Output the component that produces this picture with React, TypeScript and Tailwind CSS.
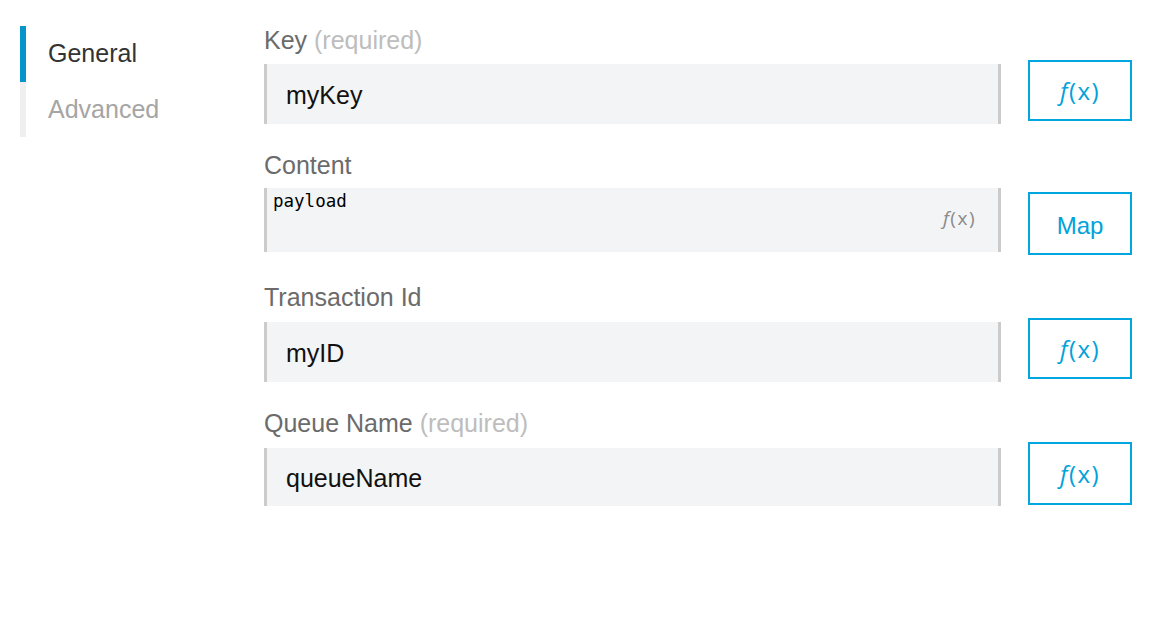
import React from "react";

const sans = "font-['Liberation_Sans',Arial,sans-serif]";

function Sidebar() {
  return (
    <nav className="w-[264px] shrink-0 pt-[26px] pl-5">
      <div className="flex h-14 items-center border-l-[6px] border-[#0795c9] pl-[22px] text-[25px] text-[#333]">
        General
      </div>
      <div className="flex h-[55px] items-center border-l-[6px] border-[#efefef] pl-[22px] text-[25px] text-[#a5a5a5]">
        Advanced
      </div>
    </nav>
  );
}

function Fx({ className }: { className: string }) {
  return (
    <span className={"font-['Open_Sans',sans-serif] tracking-[1.5px] " + className}>
      <span className="italic">f</span>(x)
    </span>
  );
}

function FxButton({ children, className }: { children: React.ReactNode; className: string }) {
  return (
    <button
      className={
        "flex w-[104px] shrink-0 items-center justify-center border-2 border-[#00a6df] bg-white text-[#00a2da] " +
        className
      }
    >
      {children}
    </button>
  );
}

function Label({ name, required }: { name: string; required?: boolean }) {
  return (
    <div className="h-6 leading-6 text-[25px] text-[#6b6b6b]">
      {name}
      {required && <span className="text-[#bdbdbd]"> (required)</span>}
    </div>
  );
}

export default function App() {
  return (
    <div className={`flex h-[640px] w-[1152px] bg-white ${sans}`}>
      <Sidebar />
      <main className="flex flex-col pt-7">
        {/* Key */}
        <Label name="Key" required />
        <div className="mt-3 flex gap-[27px]">
          <div className="flex h-[60px] w-[737px] items-center border-x-[3px] border-[#cbcbcb] bg-[#f3f4f6] pl-[19px] pt-1 text-[25px] text-[#111]">
            myKey
          </div>
          <FxButton className="-mt-1 h-[61px]">
            <Fx className="text-[24px]" />
          </FxButton>
        </div>

        {/* Content */}
        <div className="mt-[29px]">
          <Label name="Content" />
        </div>
        <div className="mt-[11px] flex gap-[27px]">
          <div className="relative h-16 w-[737px] border-x-[3px] border-[#cbcbcb] bg-[#f3f4f6] pl-[6px] pt-[1px]">
            <span className="font-['DejaVu_Sans_Mono',monospace] text-[17.5px] leading-6 text-black">payload</span>
            <span className="absolute right-[22px] top-[16px]">
              <Fx className="text-[19px] tracking-[0.5px] text-[#8a8a8a]" />
            </span>
          </div>
          <FxButton className="mt-1 h-[63px] pt-1 text-[24px]">Map</FxButton>
        </div>

        {/* Transaction Id */}
        <div className="mt-[30px]">
          <Label name="Transaction Id" />
        </div>
        <div className="mt-[13px] flex gap-[27px]">
          <div className="flex h-[60px] w-[737px] items-center border-x-[3px] border-[#cbcbcb] bg-[#f3f4f6] pl-[19px] pt-1 text-[25px] text-[#111]">
            myID
          </div>
          <FxButton className="-mt-1 h-[61px]">
            <Fx className="text-[24px]" />
          </FxButton>
        </div>

        {/* Queue Name */}
        <div className="mt-[29px]">
          <Label name="Queue Name" required />
        </div>
        <div className="mt-[13px] flex gap-[27px]">
          <div className="flex h-[58px] w-[737px] items-center border-x-[3px] border-[#cbcbcb] bg-[#f3f4f6] pl-[19px] pt-1 text-[25px] text-[#111]">
            queueName
          </div>
          <FxButton className="-mt-1.5 h-[63px]">
            <Fx className="text-[24px]" />
          </FxButton>
        </div>
      </main>
    </div>
  );
}
